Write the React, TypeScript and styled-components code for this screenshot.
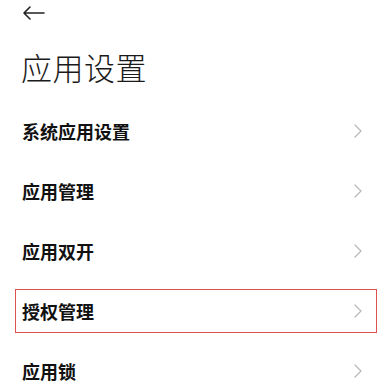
import styled, { createGlobalStyle } from "styled-components";

const GlobalStyle = createGlobalStyle`
  html, body {
    margin: 0;
    padding: 0;
    background: #ffffff;
  }
  body {
    font-family: "Noto Sans CJK SC", "Noto Sans", sans-serif;
    color: #111111;
  }
`;

const Page = styled.div`
  width: 392px;
  height: 388px;
  overflow: hidden;
  display: flex;
  flex-direction: column;
`;

const TopBar = styled.div`
  height: 25px;
  flex-shrink: 0;
  display: flex;
  align-items: center;
  padding-left: 23px;
`;

const Title = styled.h1`
  flex-shrink: 0;
  margin: 22px 0 0 21px;
  font-size: 31px;
  line-height: 40px;
  font-weight: 300;
  color: #1a1a1a;
  letter-spacing: 0.5px;
`;

const List = styled.div`
  flex-shrink: 0;
  margin-top: 14px;
  display: flex;
  flex-direction: column;
`;

const Row = styled.div`
  height: 60px;
  flex-shrink: 0;
  padding: 0 15px;
  display: flex;
  align-items: center;
`;

const Item = styled.div<{ $highlighted?: boolean }>`
  flex: 1;
  height: 44px;
  box-sizing: border-box;
  display: flex;
  align-items: center;
  justify-content: space-between;
  padding: 0 14px 0 6px;
  border: 1px solid ${({ $highlighted }) => ($highlighted ? "#e0504e" : "transparent")};
`;

const Label = styled.span`
  font-size: 18px;
  font-weight: 700;
  color: #111111;
`;

const BackArrow = () => (
  <svg width="22" height="14" viewBox="0 0 22 14" fill="none">
    <path d="M1 7H21M1 7L7 1M1 7L7 13" stroke="#222" strokeWidth="1.6" strokeLinecap="round" strokeLinejoin="round" />
  </svg>
);

const Chevron = () => (
  <svg width="8" height="14" viewBox="0 0 8 14" fill="none">
    <path d="M1 1L7 7L1 13" stroke="#b8b8b8" strokeWidth="1.2" strokeLinecap="round" strokeLinejoin="round" />
  </svg>
);

const items = [
  { label: "系统应用设置" },
  { label: "应用管理" },
  { label: "应用双开" },
  { label: "授权管理", highlighted: true },
  { label: "应用锁" },
];

export default function App() {
  return (
    <Page>
      <GlobalStyle />
      <TopBar>
        <BackArrow />
      </TopBar>
      <Title>应用设置</Title>
      <List>
        {items.map((it) => (
          <Row key={it.label}>
            <Item $highlighted={it.highlighted}>
              <Label>{it.label}</Label>
              <Chevron />
            </Item>
          </Row>
        ))}
      </List>
    </Page>
  );
}
